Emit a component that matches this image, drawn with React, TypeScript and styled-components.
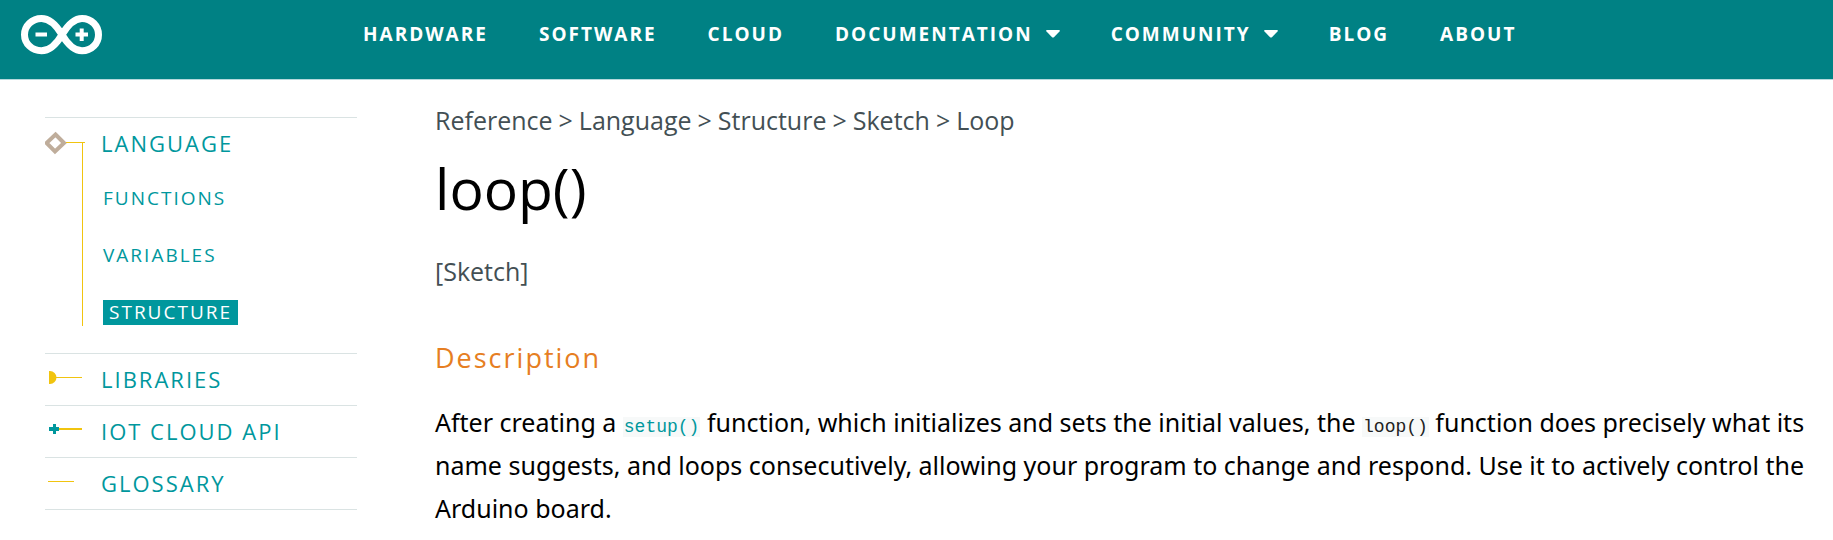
import React from 'react';
import styled, { createGlobalStyle } from 'styled-components';

const GlobalStyle = createGlobalStyle`
  * { box-sizing: border-box; }
  body {
    margin: 0;
    background: #fff;
    color: #000;
    font-family: 'Open Sans', 'Noto Sans', sans-serif;
  }
  a { color: inherit; text-decoration: none; }
  ul, ol { list-style: none; margin: 0; padding: 0; }
`;

const Header = styled.header`
  display: flex;
  align-items: flex-start;
  height: 80px;
  padding: 14px 21px 0;
  background: #008184;
  border-bottom: 1px solid #b5d9dc;
`;

const LogoLink = styled.a`
  display: block;
  width: 82px;
  height: 42px;
  margin-right: 260px;
`;

const NavList = styled.ul`
  display: flex;
  gap: 51px;
`;

const navText = `
  display: flex;
  align-items: center;
  gap: 13px;
  padding: 0;
  border: 0;
  background: none;
  color: #fff;
  font: 700 19px/40px 'Open Sans', 'Noto Sans', sans-serif;
  letter-spacing: 2px;
  white-space: nowrap;
`;

const NavLink = styled.a`${navText}`;
const NavButton = styled.button`${navText}`;

const Page = styled.div`
  display: flex;
  align-items: flex-start;
`;

const Sidebar = styled.nav`
  flex: 0 0 312px;
  margin: 37px 78px 0 45px;
  border-bottom: 1px solid #dae3e3;
  color: #00979d;
`;

const Section = styled.section`
  display: flex;
  border-top: 1px solid #dae3e3;
`;

const Marker = styled.svg`
  flex: none;
  display: block;
  width: 56px;
`;

const SectionLink = styled.a`
  display: block;
  font-size: 22px;
  line-height: 51px;
  letter-spacing: 2px;
`;

const SubList = styled.ul`
  padding: 1px 0 12px;
`;

const SubItem = styled.li`
  display: flex;
  align-items: center;
  height: 57px;
  padding-left: 2px;
`;

const SubLink = styled.a<{ $active?: boolean }>`
  font-size: 19px;
  line-height: 25px;
  letter-spacing: 2px;
  padding: ${(p) => (p.$active ? '0 6px' : '0')};
  background: ${(p) => (p.$active ? '#00979d' : 'transparent')};
  color: ${(p) => (p.$active ? '#fff' : 'inherit')};
`;

const Article = styled.main`
  flex: 1;
  min-width: 0;
  padding: 23px 8px 0 0;
`;

const Breadcrumbs = styled.ol`
  display: flex;
  gap: 6px;
  color: #434f54;
  font-size: 25px;
  line-height: 34px;
`;

const Crumb = styled.li`
  display: flex;
  gap: 6px;
  & + &::before { content: '>'; }
`;

const Title = styled.h1`
  margin: 13px 0 0;
  font-size: 57px;
  font-weight: 400;
  line-height: 76px;
`;

const Category = styled.p`
  margin: 24px 0 0;
  color: #434f54;
  font-size: 25px;
  line-height: 43px;
`;

const Subtitle = styled.h2`
  margin: 46px 0 0;
  color: #e67e22;
  font-size: 27px;
  font-weight: 400;
  line-height: 38px;
  letter-spacing: 2px;
`;

const Body = styled.p`
  margin: 24px 0 0;
  font-family: 'Noto Sans', 'Open Sans', sans-serif;
  font-size: 25px;
  line-height: 43px;
`;

const Code = styled.code<{ $link?: boolean }>`
  padding: 0 1px;
  background: #f7f9f9;
  color: ${(p) => (p.$link ? '#00979d' : '#222')};
  font-family: 'Liberation Mono', monospace;
  font-size: 18px;
  line-height: 20px;
`;

const Logo = () => (
  <svg width="82" height="42" viewBox="0 0 82 42" fill="none" stroke="#fff" aria-hidden="true">
    <path
      strokeWidth="7"
      d="M41 20.700C34 9 27 4.500 20.500 4.500C11 4.500 3.500 12 3.500 20.700C3.500 29.500 11 36.800 20.500 36.800C27 36.800 34 32.500 41 20.700C48 9 55 4.500 61 4.500C70.500 4.500 77.500 12 77.500 20.700C77.500 29.500 70.500 36.800 61 36.800C55 36.800 48 32.500 41 20.700Z"
    />
    <path strokeWidth="4" d="M14.500 20.500H26M54.500 20.500H67M60.700 14.500V27" />
  </svg>
);

const Caret = () => (
  <svg width="14" height="8" viewBox="0 0 14 8" aria-hidden="true">
    <path fill="#fff" d="M1 0H13Q14.500 .3 13.500 1.500L8.200 7Q7 8 5.800 7L.5 1.500Q-.5 .3 1 0Z" />
  </svg>
);

const navItems = [
  { label: 'HARDWARE' },
  { label: 'SOFTWARE' },
  { label: 'CLOUD' },
  { label: 'DOCUMENTATION', menu: true },
  { label: 'COMMUNITY', menu: true },
  { label: 'BLOG' },
  { label: 'ABOUT' },
];

const crumbs = ['Reference', 'Language', 'Structure', 'Sketch'];

export default function App() {
  return (
    <>
      <GlobalStyle />
      <Header>
        <LogoLink href="#" aria-label="Arduino"><Logo /></LogoLink>
        <nav>
          <NavList>
            {navItems.map(({ label, menu }) => (
              <li key={label}>
                {menu ? (
                  <NavButton type="button" aria-haspopup="true">{label}<Caret /></NavButton>
                ) : (
                  <NavLink href="#">{label}</NavLink>
                )}
              </li>
            ))}
          </NavList>
        </nav>
      </Header>
      <Page>
        <Sidebar>
          <Section>
            <Marker height="235" viewBox="0 0 56 235" fill="none">
              <path stroke="#bfad9b" strokeWidth="4" d="M10.500 16.500L19 25L10 33.500L1.500 25Z" />
              <g fill="#f1c40f" shapeRendering="crispEdges">
                <rect x="21" y="24" width="19" height="1" />
                <rect x="37" y="24" width="1" height="184" />
              </g>
            </Marker>
            <div>
              <SectionLink href="#">LANGUAGE</SectionLink>
              <SubList>
                <SubItem><SubLink href="#">FUNCTIONS</SubLink></SubItem>
                <SubItem><SubLink href="#">VARIABLES</SubLink></SubItem>
                <SubItem><SubLink href="#" $active>STRUCTURE</SubLink></SubItem>
              </SubList>
            </div>
          </Section>
          <Section>
            <Marker height="51" viewBox="0 0 56 51" fill="#f1c40f">
              <path d="M4 17H5A6.500 6.500 0 0 1 5 30H4Z" />
              <rect x="10" y="23" width="27" height="1" shapeRendering="crispEdges" />
            </Marker>
            <SectionLink href="#">LIBRARIES</SectionLink>
          </Section>
          <Section>
            <Marker height="51" viewBox="0 0 56 51">
              <path fill="#f1c40f" d="M14 22H37V24H14Z" />
              <path fill="#00979d" d="M8 18H11V21H14V25H11V28H8V25H4V21H8Z" />
            </Marker>
            <SectionLink href="#">IOT CLOUD API</SectionLink>
          </Section>
          <Section>
            <Marker height="51" viewBox="0 0 56 51">
              <rect fill="#f1c40f" x="3" y="23" width="26" height="1" shapeRendering="crispEdges" />
            </Marker>
            <SectionLink href="#">GLOSSARY</SectionLink>
          </Section>
        </Sidebar>
        <Article>
          <nav aria-label="Breadcrumb">
            <Breadcrumbs>
              {crumbs.map((name) => (
                <Crumb key={name}><a href="#">{name}</a></Crumb>
              ))}
              <Crumb aria-current="page">Loop</Crumb>
            </Breadcrumbs>
          </nav>
          <Title>loop()</Title>
          <Category>[Sketch]</Category>
          <Subtitle>Description</Subtitle>
          <Body>
            After creating a <a href="#"><Code $link>setup()</Code></a> function, which initializes and
            sets the initial values, the <Code>loop()</Code> function does precisely what its name
            suggests, and loops consecutively, allowing your program to change and respond. Use it to
            actively control the Arduino board.
          </Body>
        </Article>
      </Page>
    </>
  );
}
